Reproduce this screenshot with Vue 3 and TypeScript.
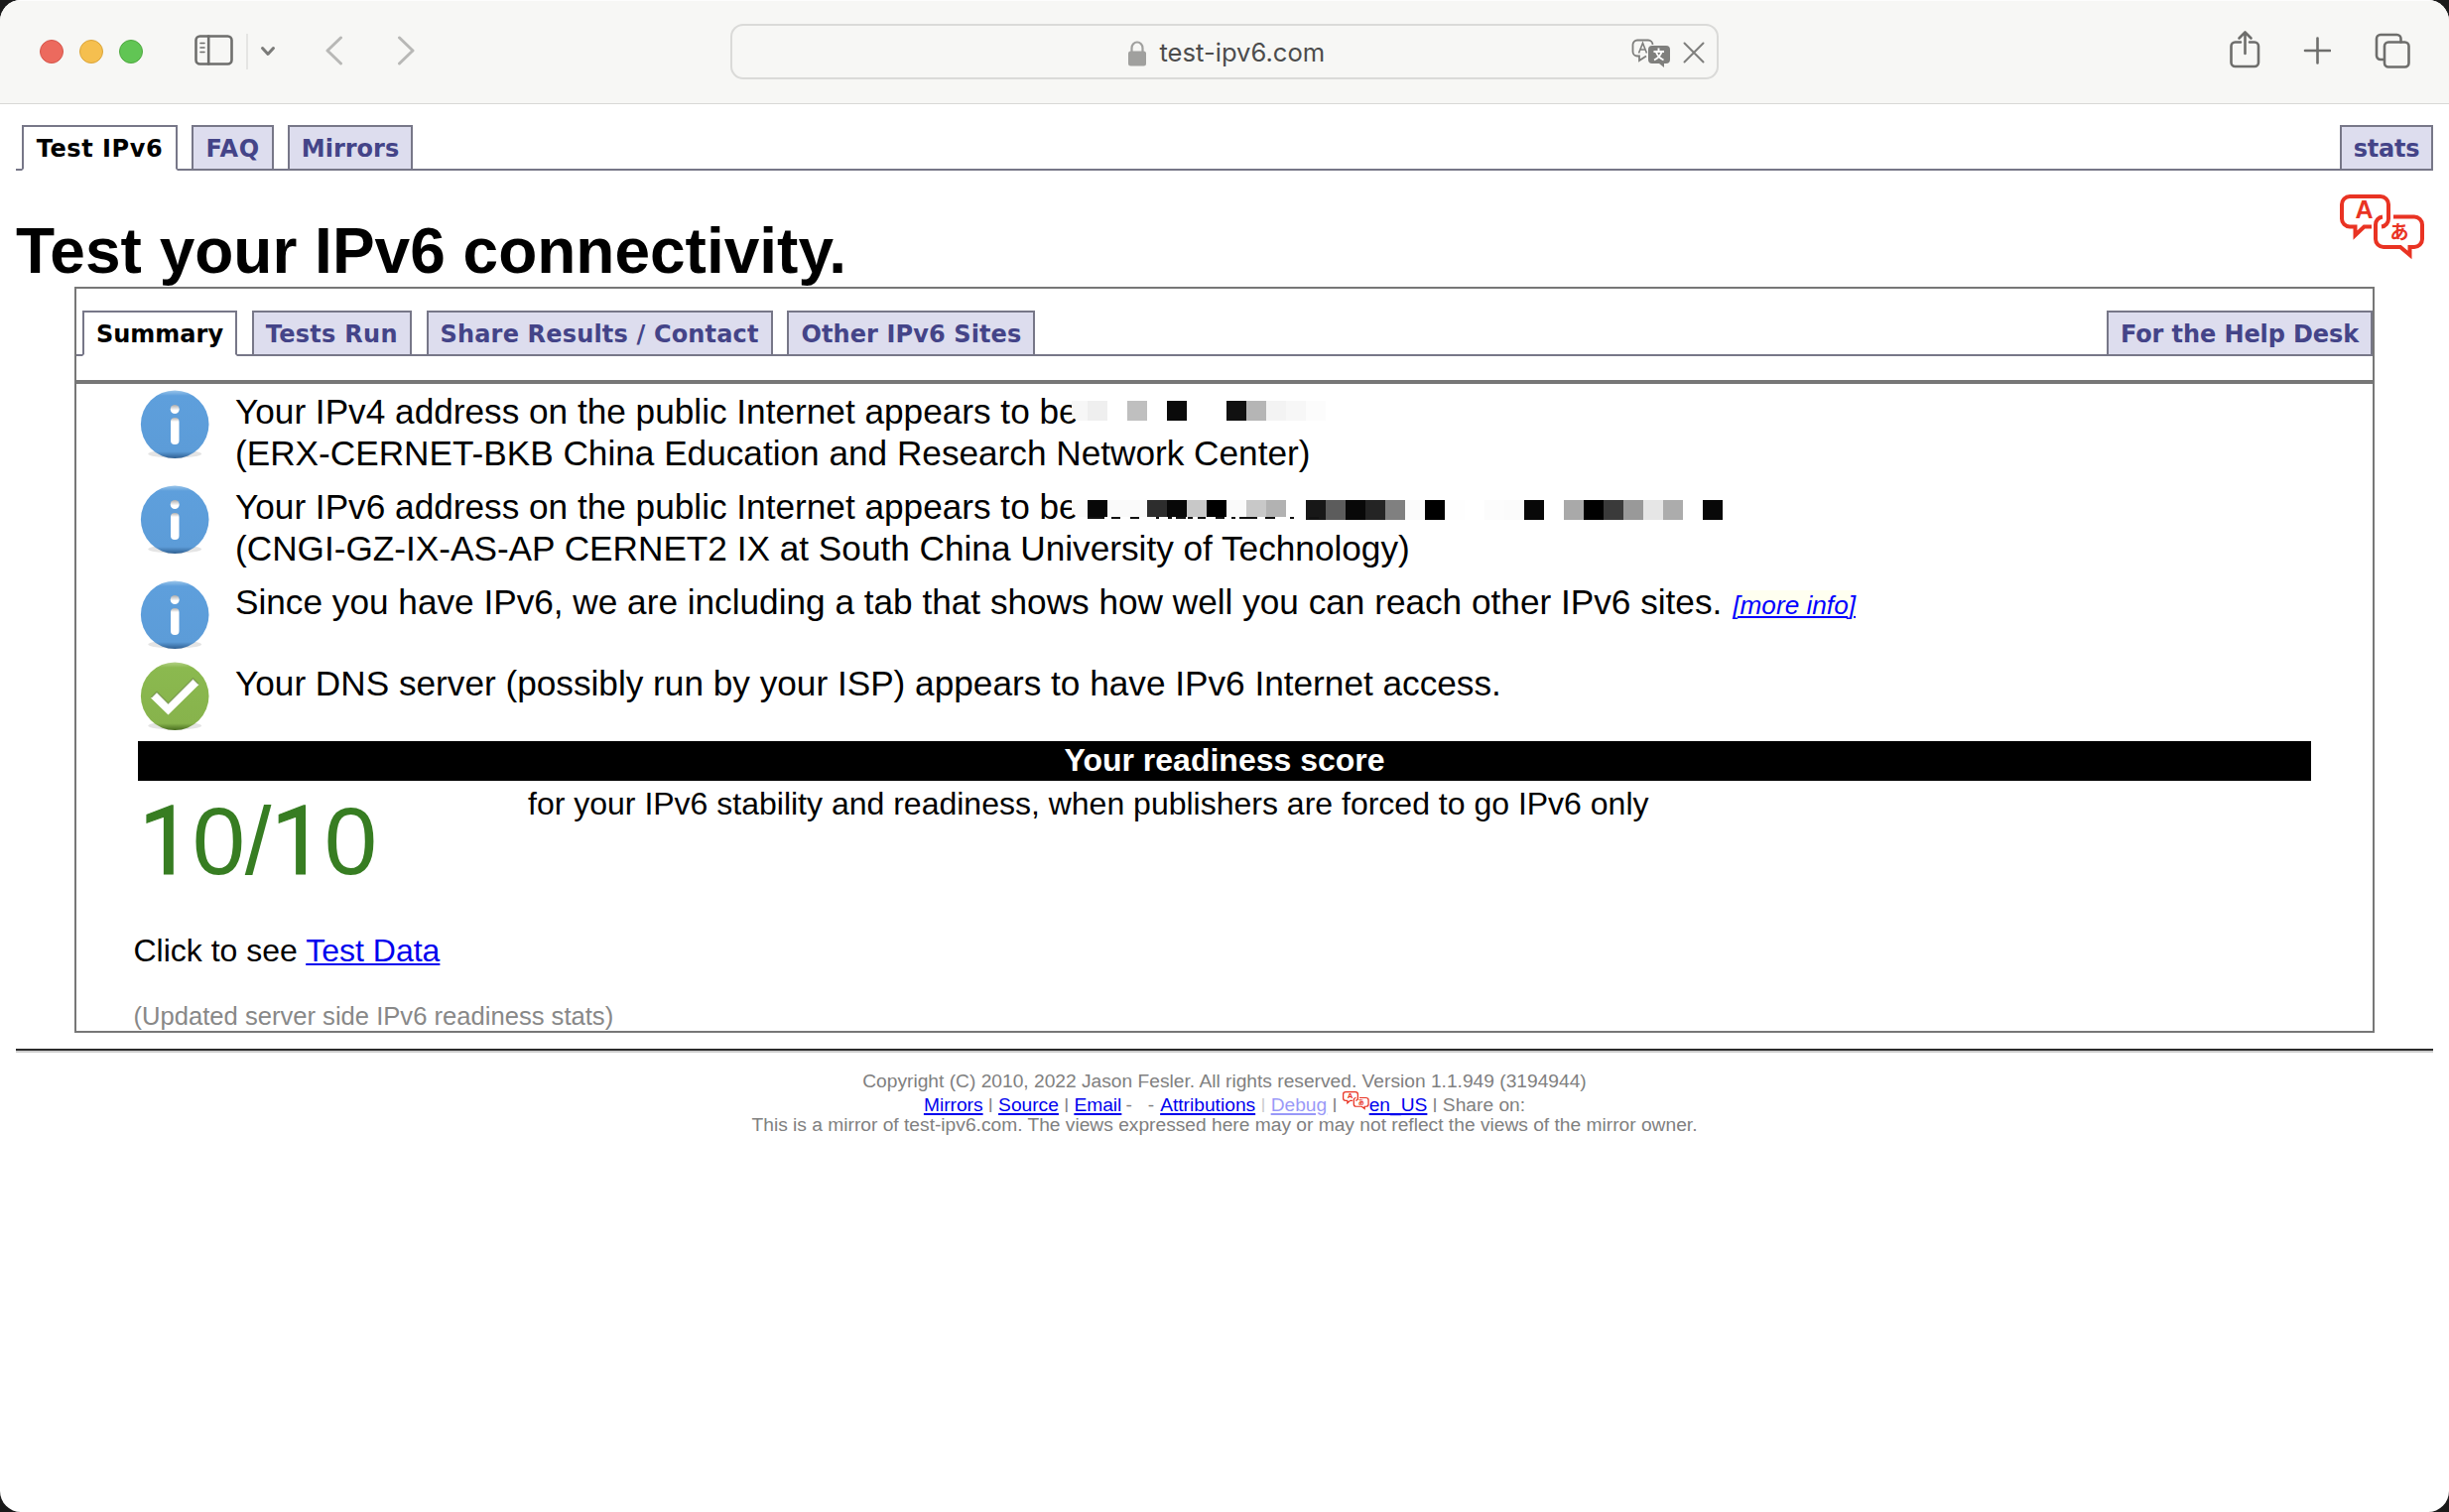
<script setup lang="ts">
interface Tab { label: string; width: number; spacing: number; active?: boolean; right?: boolean }

const siteTabs: Tab[] = [
  { label: 'Test IPv6', width: 157, spacing: 0.55, active: true },
  { label: 'FAQ', width: 83, spacing: 0.5 },
  { label: 'Mirrors', width: 126, spacing: 0 },
  { label: 'stats', width: 94, spacing: -0.2, right: true },
]
const resultTabs: Tab[] = [
  { label: 'Summary', width: 156, spacing: 0, active: true },
  { label: 'Tests Run', width: 161, spacing: 0.28 },
  { label: 'Share Results / Contact', width: 349, spacing: 0.17 },
  { label: 'Other IPv6 Sites', width: 250, spacing: 0.11 },
  { label: 'For the Help Desk', width: 268, spacing: -0.1, right: true },
]

/* Shades of the 20px blocks that cover the two addresses */
const maskV4: string[] = ['#f7f7f7', '#efefef', '#fff', '#bfbfbf', '#fff', '#0a0a0a', '#fff', '#fff', '#111', '#b5b5b5', '#f3f3f3', '#f7f7f7', '#fcfcfc']
const maskV6: string[] = ['#fafafa', '#080808', '#fafafa', '#fafafa', '#2d2d2d', '#080808', '#c8c8c8', '#000', '#fafafa', '#c8c8c8', '#b2b2b2', '#fff', '#171717', '#5c5c5c', '#080808', '#242424', '#808080', '#fbfbfb', '#000', '#fefefe', '#fff', '#fcfcfc', '#fbfbfb', '#080808', '#fff', '#a9a9a9', '#000', '#3a3a3a', '#999', '#e6e6e6', '#acacac', '#fff', '#080808']
</script>

<template>
  <div class="window">
    <header class="toolbar">
      <span class="light red"></span><span class="light yellow"></span><span class="light green"></span>
      <svg class="ico sidebar" width="40" height="32" viewBox="0 0 40 32"><rect x="1.5" y="1.5" width="36" height="28" rx="4" /><path d="M14.200 1.500v28" /><path class="thin" d="M6 8.500h4M6 13h4M6 17.500h4" /></svg>
      <span class="divider"></span>
      <svg class="ico chev" width="16" height="12" viewBox="0 0 16 12"><path d="M2.500 2.500L8 8.500L13.500 2.500" /></svg>
      <svg class="ico arrow back" width="18" height="30" viewBox="0 0 18 30"><path d="M15.500 2L2 15L15.500 28" /></svg>
      <svg class="ico arrow fwd" width="18" height="30" viewBox="0 0 18 30"><path d="M2.500 2L16 15L2.500 28" /></svg>
      <div class="address">
        <svg class="lock" width="18" height="26" viewBox="0 0 18 26"><rect y="10.500" width="18" height="15" rx="2.500" fill="#a0a09e" /><path d="M3.500 11V7.500a5.500 6 0 0 1 11 0V11" fill="none" stroke="#a0a09e" stroke-width="2.200" /></svg>
        <span class="url">test-ipv6.com</span>
        <svg class="translate" width="40" height="30" viewBox="0 0 40 30">
          <path d="M15 17.500L8 22v-4.500H6a4.500 4.500 0 0 1-4.500-4.500V6A4.500 4.500 0 0 1 6 1.500H17A4.500 4.500 0 0 1 21.500 6" fill="none" stroke="#7f7f7d" stroke-width="1.800" />
          <path d="M7.500 14.500L11.500 4.500L15.500 14.500M9 11h5" fill="none" stroke="#7f7f7d" stroke-width="1.600" />
          <path d="M21 7H35a4 4 0 0 1 4 4V21a4 4 0 0 1-4 4H33v4l-5-4H21a4 4 0 0 1-4-4V11a4 4 0 0 1 4-4z" fill="#7f7f7d" />
          <path d="M27.500 9.500v3M22.500 13h10.500M30.500 13.500q-2 5.500-7.500 8M25 13.500q2 5.500 7.500 8" fill="none" stroke="#fff" stroke-width="1.900" />
        </svg>
        <svg class="close" width="22" height="22" viewBox="0 0 22 22"><path d="M1.500 1.500L20.500 20.500M20.500 1.500L1.500 20.500" /></svg>
      </div>
      <svg class="ico share" width="32" height="40" viewBox="0 0 32 40"><path d="M11 12.500H5.500a4 4 0 0 0-4 4V33a4 4 0 0 0 4 4H25a4 4 0 0 0 4-4V16.500a4 4 0 0 0-4-4H20M15.500 24V2.500M9.500 8.500L15.500 2.500L21.500 8.500" /></svg>
      <svg class="ico plus" width="28" height="28" viewBox="0 0 28 28"><path d="M14.500 1.500V26.500M2 14H27" /></svg>
      <svg class="ico overview" width="36" height="36" viewBox="0 0 36 36"><path d="M9.500 27H6a4 4 0 0 1-4-4V6a4 4 0 0 1 4-4H22.500a4 4 0 0 1 4 4V9.500" /><rect x="10" y="9.500" width="24.500" height="25" rx="4" /></svg>
    </header>

    <main class="page">
      <nav class="tabs">
        <a v-for="t in siteTabs" :key="t.label" class="tab" :class="{ active: t.active, right: t.right }" :style="{ width: t.width + 'px', letterSpacing: t.spacing + 'px' }">{{ t.label }}</a>
      </nav>
      <div class="heading">
        <h1>Test your IPv6 connectivity.</h1>
        <svg class="lang" width="86" height="66" viewBox="0 0 86 66">
          <g id="bubbles">
            <g fill="none" stroke="#e93323" stroke-width="4">
              <path d="M32 32.500H24.500L15.500 41V32.500H10a8 8 0 0 1-8-8V10a8 8 0 0 1 8-8H41a8 8 0 0 1 8 8V24.500a8 8 0 0 1-7 8" />
              <path d="M54 22.500H75a8 8 0 0 1 8 8V45a8 8 0 0 1-8 8H70.500V61L61 53H44a8 8 0 0 1-8-8V30.500a8 8 0 0 1 7-8" />
            </g>
            <text x="24.500" y="24" class="lang-a" text-anchor="middle">A</text>
            <text x="60" y="45" class="lang-b" text-anchor="middle">あ</text>
          </g>
        </svg>
      </div>

      <section class="panel">
        <nav class="tabs inner">
          <a v-for="t in resultTabs" :key="t.label" class="tab" :class="{ active: t.active, right: t.right }" :style="{ width: t.width + 'px', letterSpacing: t.spacing + 'px' }">{{ t.label }}</a>
        </nav>
        <div class="rule"></div>

        <svg width="0" height="0" class="defs">
          <defs>
            <linearGradient id="blue" x1="0" y1="0" x2="0" y2="1"><stop offset="0" stop-color="#9cc6ea" /><stop offset=".08" stop-color="#5e9fdc" /><stop offset=".9" stop-color="#5c9cd8" /><stop offset="1" stop-color="#2f5f91" /></linearGradient>
            <linearGradient id="green" x1="0" y1="0" x2="0" y2="1"><stop offset="0" stop-color="#b4d187" /><stop offset=".08" stop-color="#8bb94f" /><stop offset=".9" stop-color="#87b34c" /><stop offset="1" stop-color="#486d1e" /></linearGradient>
            <linearGradient id="dent" x1="0" y1="0" x2="0" y2="1"><stop offset="0" stop-color="#b0b0b0" /><stop offset=".15" stop-color="#fff" /></linearGradient>
            <linearGradient id="dot" x1="0" y1="0" x2="0" y2="1"><stop offset="0" stop-color="#aaa" /><stop offset=".6" stop-color="#fff" /></linearGradient>
            <g id="info"><ellipse cx="35.200" cy="64.500" rx="27" ry="4" fill="#e4e4e4" /><circle cx="35.200" cy="34.700" r="34.300" fill="url(#blue)" /><circle cx="35.200" cy="19.500" r="4.500" fill="url(#dot)" /><rect x="31" y="28" width="8.500" height="27" rx="4" fill="url(#dent)" /></g>
          </defs>
        </svg>

        <div class="row">
          <svg width="72" height="72"><use href="#info" /></svg>
          <p><span class="masked">Your IPv4 address on the public Internet appears to be
            <span class="mosaic v4"><i v-for="(c, n) in maskV4" :key="n" :style="{ background: c }"></i></span></span><br>(ERX-CERNET-BKB China Education and Research Network Center)</p>
        </div>
        <div class="row">
          <svg width="72" height="72"><use href="#info" /></svg>
          <p><span class="masked">Your IPv6 address on the public Internet appears to be
            <span class="mosaic v6"><i v-for="(c, n) in maskV6" :key="n" :class="{ short: n < 12 }" :style="{ background: c }"></i></span>
            <svg class="remnant" width="240" height="2" viewBox="0 0 240 2"><path d="M1 1h17M25 1h9M44 1h9M70 1h3M82 1h4M90 1h10M102 1h5M112 1h8M130 1h9M146 1h4M154 1h18M180 1h10M205 1h4M224 1h10" /></svg></span><br>(CNGI-GZ-IX-AS-AP CERNET2 IX at South China University of Technology)</p>
        </div>
        <div class="row third">
          <svg width="72" height="72"><use href="#info" /></svg>
          <p>Since you have IPv6, we are including a tab that shows how well you can reach other IPv6 sites.<a class="more">[more info]</a></p>
        </div>
        <div class="row fourth">
          <svg width="72" height="72" viewBox="0 0 72 72"><ellipse cx="35.200" cy="64.500" rx="27" ry="4" fill="#e4e4e4" /><circle cx="35.200" cy="34.700" r="34.300" fill="url(#green)" /><path d="M11 36.500L17 30.500L28.500 42L53.500 17L59.500 23L28.500 53.500z" fill="#fff" /><path d="M11.500 36L17 30.500L28.500 42L53.500 17L59 22.500" fill="none" stroke="#5c7c35" stroke-opacity=".55" stroke-width="1.500" /></svg>
          <p>Your DNS server (possibly run by your ISP) appears to have IPv6 Internet access.</p>
        </div>

        <div class="bar">Your readiness score</div>
        <div class="score">
          <div class="points"><b>1</b>0/<b>1</b>0</div>
          <p>for your IPv6 stability and readiness, when publishers are forced to go IPv6 only</p>
        </div>
        <p class="click">Click to see <a>Test Data</a></p>
        <p class="updated">(Updated server side IPv6 readiness stats)</p>
      </section>

      <div class="end-rule"></div>
      <footer>
        <p>Copyright (C) 2010, 2022 Jason Fesler. All rights reserved. Version 1.1.949 (3194944)</p>
        <p class="links">
          <a>Mirrors</a><s>|</s><a>Source</a><s>|</s><a>Email</a><span class="dash1">-</span><span class="dash2">-</span><a>Attributions</a><s class="faint">|</s><a class="faint">Debug</a><s>|</s><svg class="mini" width="27" height="19" viewBox="0 0 86 66" preserveAspectRatio="none"><use href="#bubbles" /></svg><a>en_US</a><s>|</s><span>Share on:</span>
        </p>
        <p class="mirror">This is a mirror of test-ipv6.com. The views expressed here may or may not reflect the views of the mirror owner.</p>
      </footer>
    </main>
  </div>
</template>

<style>
body { background: #1a1a1a; }
</style>

<style scoped>
.window { width: 2468px; height: 1524px; border-radius: 21px; overflow: hidden; background: #fff; font-family: "Liberation Sans", Arial, sans-serif; color: #000; }
p, h1 { margin: 0; white-space: nowrap; }
a { color: #00e; }
.toolbar { box-sizing: border-box; height: 105px; display: flex; align-items: flex-start; background: #f7f7f5; border-bottom: 1px solid #d8d8d6; border-top: 1px solid #fdfdfd; padding-left: 40px; }
.toolbar > * { flex: none; }
.light { width: 24px; height: 24px; border-radius: 50%; margin: 39px 16px 0 0; box-sizing: border-box; }
.red { background: #ec6a5e; border: 1px solid #d5564b; }
.yellow { background: #f5bf4f; border: 1px solid #dba53a; }
.green { background: #61c554; border: 1px solid #4fa940; }
.ico { fill: none; stroke: #6e6e6c; stroke-width: 2.6; stroke-linecap: round; stroke-linejoin: round; }
.thin { stroke-width: 1.6; }
.sidebar { margin: 34px 0 0 36px; }
.divider { width: 2px; height: 36px; background: #e5e5e3; margin: 33px 0 0 12px; }
.chev { margin: 45px 0 0 12px; stroke: #7b7b79; stroke-width: 3; }
.arrow { stroke: #b8b8b6; stroke-width: 3; }
.back { margin: 35px 0 0 50px; }
.fwd { margin: 35px 0 0 54px; }
.address { box-sizing: border-box; display: flex; align-items: flex-start; width: 996px; height: 56px; margin: 23px 0 0 318px; border: 2px solid #dadad8; border-radius: 13px; }
.lock { margin: 15px 0 0 399px; }
.url { margin: 11px 0 0 13.500px; font: 25.6px/32px Inter, sans-serif; color: #4c4c4c; white-space: nowrap; }
.translate { margin: 13px 0 0 308.500px; }
.close { margin: 16px 0 0 12px; fill: none; stroke: #7f7f7d; stroke-width: 2; stroke-linecap: round; }
.share { margin: 29px 0 0 515px; }
.plus { margin: 36px 0 0 42px; }
.overview { margin: 32px 0 0 44px; }

.page { padding: 21px 16px 0; }
.tabs { display: flex; gap: 14px; height: 44px; padding-left: 6px; border-bottom: 2px solid #778; }
.inner { gap: 14.800px; }
.tab { box-sizing: border-box; flex: none; height: 46px; border: 2px solid #778; background: #dde; color: #448; font: bold 24px/44px "DejaVu Sans", Verdana, sans-serif; text-align: center; white-space: nowrap; }
.tab.active { background: #fff; color: #000; border-bottom-color: #fff; }
.tab.right { margin-left: auto; }
.heading { display: flex; justify-content: space-between; height: 117px; }
h1 { font-size: 64px; line-height: 74px; margin-top: 44px; }
.lang { margin: 24px 8px 0 0; }
.lang-a { font: bold 25px "Liberation Sans", sans-serif; fill: #e93323; }
.lang-b { font: bold 19px "Noto Sans CJK JP", sans-serif; fill: #e93323; }

.panel { box-sizing: border-box; height: 752px; margin: 0 59px; border: 2px solid #777; padding-top: 22px; }
.rule { height: 4px; margin-top: 24px; background: #777; }
.defs { display: block; }
.row { display: flex; height: 90px; padding: 6px 0 0 64px; }
.row > svg { flex: none; margin-right: 24px; }
.row p { padding-top: 1px; font-size: 35.2px; line-height: 42px; }
.third { height: 76px; }
.fourth { height: 80px; }
.masked { position: relative; }
.mosaic { position: absolute; left: 839px; display: flex; }
.mosaic i { width: 20px; height: 20px; flex: none; }
.mosaic i.short { height: 17px; }
.mosaic i:first-child { width: 16px; margin-left: 4px; border-bottom-left-radius: 8px; }
.v4 { top: 9px; }
.v6 { top: 13px; }
.remnant { position: absolute; left: 858px; top: 30px; stroke: #111; stroke-width: 2; }
.more { margin-left: 11px; background: #fffff0; color: #00f; font-size: 26.2px; font-style: italic; text-decoration: underline 2px; text-underline-offset: 2px; }
.bar { height: 40px; margin: 0 62px; background: #000; color: #fff; font: bold 32px/38px "Liberation Sans", sans-serif; text-align: center; }
.score { display: flex; height: 153px; padding-left: 63px; }
.points { width: 392px; font-size: 96px; line-height: 110px; padding-top: 6px; color: #377d22; box-sizing: border-box; letter-spacing: -0.3px; }
.points b { font: 400 96px/0 Roboto, sans-serif; -webkit-text-stroke: 1.2px #377d22; }
.score p { font-size: 32px; line-height: 36px; padding-top: 5px; }
.click { font-size: 32px; line-height: 36px; padding-left: 57.500px; }
.click a, .links a { text-decoration: underline 2px; text-underline-offset: 2px; }
.updated { margin-top: 33px; padding-left: 57.500px; font-size: 25.6px; line-height: 30px; color: #888; }
.end-rule { margin-top: 16px; height: 2px; background: #2b2b2b; border-bottom: 2px solid #ccc; }
footer { margin-top: 17px; font-size: 19.2px; line-height: 24px; color: #808080; text-align: center; }
.links { display: flex; justify-content: center; height: 24px; }
.mini { margin-top: -2px; }
s { text-decoration: none; width: 15.5px; clip-path: inset(0 0 5px 0); }
.faint { opacity: .4; }
.mirror { margin-top: -2px; line-height: 20px; }
.dash1 { margin: 0 16px 0 4px; }
.dash2 { margin-right: 6px; }
</style>
